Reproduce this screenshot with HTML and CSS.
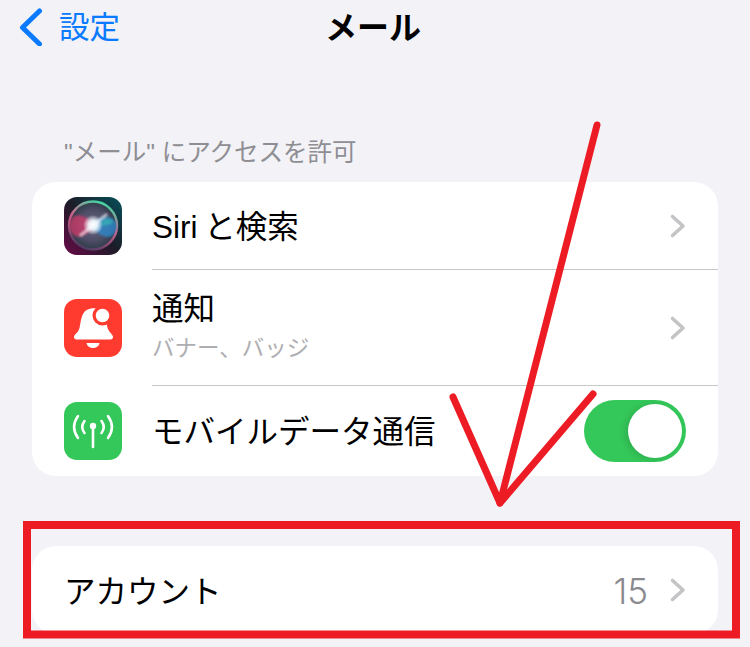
FILE: index.html
```html
<!DOCTYPE html>
<html lang="ja">
<head>
    <meta charset="UTF-8">
    <title>メール</title>
    <link rel="stylesheet" href="styles.css">
</head>
<body>
    <div class="screen">
        <header class="nav">
            <a class="back">
                <svg class="back-icon" width="26" height="38" viewBox="0 0 26 38">
                    <path d="M21.5 3 L4.5 19.5 L21.5 36" fill="none" stroke="#0a7aff" stroke-width="5" stroke-linecap="round" stroke-linejoin="round"/>
                </svg>
                <span class="back-label">設定</span>
            </a>
            <h1 class="title">メール</h1>
        </header>

        <div class="section-label">"メール" にアクセスを許可</div>

        <div class="card">
            <div class="row row-siri">
                <div class="icon icon-siri">
                    <svg width="58" height="58" viewBox="0 0 58 58">
                        <defs>
                            <radialGradient id="siriBg" cx="50%" cy="50%" r="50%">
                                <stop offset="0" stop-color="#6a6a88"/>
                                <stop offset="0.7" stop-color="#4a4a62"/>
                                <stop offset="1" stop-color="#2c3c48"/>
                            </radialGradient>
                            <linearGradient id="siriCorner" x1="0" y1="1" x2="1" y2="0">
                                <stop offset="0" stop-color="#6a0a48"/>
                                <stop offset="0.5" stop-color="#1c1c28"/>
                                <stop offset="1" stop-color="#07505a"/>
                            </linearGradient>
                            <linearGradient id="siriRing" x1="0.7" y1="0" x2="0.3" y2="1">
                                <stop offset="0" stop-color="#3fd8a0"/>
                                <stop offset="0.45" stop-color="#d0608e"/>
                                <stop offset="1" stop-color="#4a3a60"/>
                            </linearGradient>
                            <radialGradient id="siriCore" cx="50%" cy="50%" r="50%">
                                <stop offset="0" stop-color="#fff"/>
                                <stop offset="0.45" stop-color="#f2faff" stop-opacity="0.9"/>
                                <stop offset="1" stop-color="#fff" stop-opacity="0"/>
                            </radialGradient>
                            <filter id="soft" x="-30%" y="-30%" width="160%" height="160%">
                                <feGaussianBlur stdDeviation="0.9"/>
                            </filter>
                        </defs>
                        <rect width="58" height="58" fill="url(#siriCorner)"/>
                        <circle cx="29" cy="28.5" r="24" fill="url(#siriBg)" stroke="url(#siriRing)" stroke-width="2.4"/>
                        <g filter="url(#soft)">
                            <path d="M30 29 C25 19 13 15 8 21 C4 27 5 36 11 39 C18 42 26 35 30 29 Z" fill="#d8386a" opacity="0.7"/>
                            <path d="M28 28 C33 38 43 43 49 38 C54 33 54 25 48 21 C41 18 32 22 28 28 Z" fill="#2a90d8" opacity="0.7"/>
                            <path d="M36 27 C40 20 46 20 50 25 C46 28 40 30 36 27 Z" fill="#35c0b0" opacity="0.6"/>
                        </g>
                        <path d="M17 38 L42 18" stroke="#fff" stroke-width="3.5" stroke-linecap="round" opacity="0.6" filter="url(#soft)"/>
                        <circle cx="29" cy="28" r="10" fill="url(#siriCore)"/>
                    </svg>
                </div>
                <div class="row-main">
                    <span class="row-title siri-title">Siri と検索</span>
                    <svg class="chevron" width="18" height="26" viewBox="0 0 18 26">
                        <path d="M3.5 3.5 L14 13 L3.5 22.5" fill="none" stroke="#c4c4c7" stroke-width="3.6" stroke-linecap="round" stroke-linejoin="round"/>
                    </svg>
                </div>
            </div>
            <div class="row row-notify">
                <div class="icon icon-red">
                    <svg width="58" height="58" viewBox="0 0 58 58">
                        <path d="M10 38 C10 35.5 14 34 15.5 29 C17.5 21 17 11 27 9.5 C30 9 35 9 38 12 C42 18 43 28 44 30 C45 33 49 35.5 49 38 C49 39.5 48 40.5 46.5 40.5 L12.5 40.5 C11 40.5 10 39.5 10 38 Z" fill="#fff"/>
                        <circle cx="38.5" cy="16.5" r="10" fill="#ff3b30"/>
                        <circle cx="38.5" cy="16.5" r="6.8" fill="#fff"/>
                        <path d="M22.5 44 L35.5 44 C35 47.5 32 49 29 49 C26 49 23 47.5 22.5 44 Z" fill="#fff"/>
                    </svg>
                </div>
                <div class="row-main">
                    <div class="row-text">
                        <span class="row-title">通知</span>
                        <span class="row-sub">バナー、バッジ</span>
                    </div>
                    <svg class="chevron" width="18" height="26" viewBox="0 0 18 26">
                        <path d="M3.5 3.5 L14 13 L3.5 22.5" fill="none" stroke="#c4c4c7" stroke-width="3.6" stroke-linecap="round" stroke-linejoin="round"/>
                    </svg>
                </div>
            </div>
            <div class="row row-data">
                <div class="icon icon-green">
                    <svg width="58" height="58" viewBox="0 0 58 58">
                        <g fill="none" stroke="#fff" stroke-width="2.6" stroke-linecap="round">
                            <path d="M29 24 L29 45"/>
                            <path d="M14 14 C9 21 9 29 14 36"/>
                            <path d="M20.5 19 C17.5 23 17.5 27 20.5 31"/>
                            <path d="M37.5 19 C40.5 23 40.5 27 37.5 31"/>
                            <path d="M44 14 C49 21 49 29 44 36"/>
                        </g>
                        <circle cx="29" cy="24" r="3.2" fill="#fff"/>
                    </svg>
                </div>
                <div class="row-main no-line">
                    <span class="row-title">モバイルデータ通信</span>
                    <div class="toggle"><div class="knob"></div></div>
                </div>
            </div>
        </div>

        <div class="card card-account">
            <span class="row-title">アカウント</span>
            <span class="count">15</span>
            <svg class="chevron" width="18" height="26" viewBox="0 0 18 26">
                <path d="M3.5 3.5 L14 13 L3.5 22.5" fill="none" stroke="#c4c4c7" stroke-width="3.6" stroke-linecap="round" stroke-linejoin="round"/>
            </svg>
        </div>

        <!-- red annotation drawn over the screenshot -->
        <svg class="annotation" width="750" height="647" viewBox="0 0 750 647">
            <g fill="none" stroke="#ed1c24" stroke-width="7" stroke-linecap="round" stroke-linejoin="round">
                <path d="M597 125 L500 503"/>
                <path d="M453 397 L500 503 L593 394"/>
            </g>
            <rect x="27" y="525" width="709" height="109.5" fill="none" stroke="#ed1c24" stroke-width="8"/>
        </svg>
    </div>
</body>
</html>
```

FILE: styles.css
```css
* {
    box-sizing: border-box;
}
body {
    margin: 0;
    background: #f2f2f7;
    font-family: "Liberation Sans", "Noto Sans CJK JP", sans-serif;
    color: #000;
}
.screen {
    position: relative;
    width: 750px;
    height: 647px;
    overflow: hidden;
    padding: 0 32px;
}
.nav {
    position: relative;
    height: 56px;
    display: flex;
    align-items: center;
    justify-content: center;
}
.back {
    position: absolute;
    left: -14px;
    top: 8px;
    display: flex;
    align-items: center;
    gap: 15px;
}
.back-label {
    font-size: 30.5px;
    line-height: 38px;
    color: #0a7aff;
}
.title {
    margin: 0 4px 0 0;
    font-size: 32px;
    line-height: 56px;
    font-weight: 700;
}
.section-label {
    margin-top: 80px;
    padding-left: 32px;
    height: 46px;
    font-size: 24.5px;
    line-height: 34px;
    color: #8e8e93;
}
.card {
    background: #fff;
    border-radius: 24px;
}
.row {
    display: flex;
    align-items: stretch;
    padding-left: 32px;
}
.row-siri {
    height: 88px;
}
.row-notify {
    height: 116px;
}
.row-data {
    height: 90px;
}
.icon {
    flex: none;
    width: 58px;
    height: 58px;
    margin-top: 15px;
    margin-right: 30px;
    border-radius: 13px;
    overflow: hidden;
}
.row-notify .icon {
    margin-top: 29px;
}
.row-data .icon {
    margin-top: 16px;
}
.icon svg {
    display: block;
}
.icon-red {
    background: #ff3b30;
}
.icon-green {
    background: #34c759;
}
.row-main {
    flex: 1;
    display: flex;
    align-items: center;
    justify-content: space-between;
    padding-right: 31px;
    border-bottom: 1px solid #c8c8ca;
}
.row-main.no-line {
    border-bottom: none;
    padding-right: 32px;
}
.row-main > .row-title {
    margin-top: 2px;
}
.row-text {
    display: flex;
    flex-direction: column;
    gap: 5px;
    margin-bottom: 2px;
}
.row-title {
    font-size: 31.5px;
    line-height: 40px;
    font-weight: 400;
}
.siri-title {
    word-spacing: -2px;
}
.row-sub {
    font-size: 22.5px;
    line-height: 30px;
    color: #aeaeb2;
}
.toggle {
    width: 102px;
    height: 62px;
    border-radius: 31px;
    background: #34c759;
    padding: 4px;
    display: flex;
    justify-content: flex-end;
}
.knob {
    width: 54px;
    height: 54px;
    border-radius: 50%;
    background: #fff;
    box-shadow: -3px 1px 6px rgba(0, 0, 0, 0.12);
}
.card-account {
    margin-top: 70px;
    height: 88px;
    padding: 0 31px 0 32px;
    display: flex;
    align-items: center;
}
.card-account .row-title {
    margin-top: 4px;
}
.count {
    margin-left: auto;
    margin-right: 21px;
    margin-top: 2px;
    font-family: "Inter", "Liberation Sans", sans-serif;
    font-size: 35px;
    font-weight: 300;
    color: #8a8a8e;
}
.annotation {
    position: absolute;
    left: 0;
    top: 0;
    pointer-events: none;
}
```
